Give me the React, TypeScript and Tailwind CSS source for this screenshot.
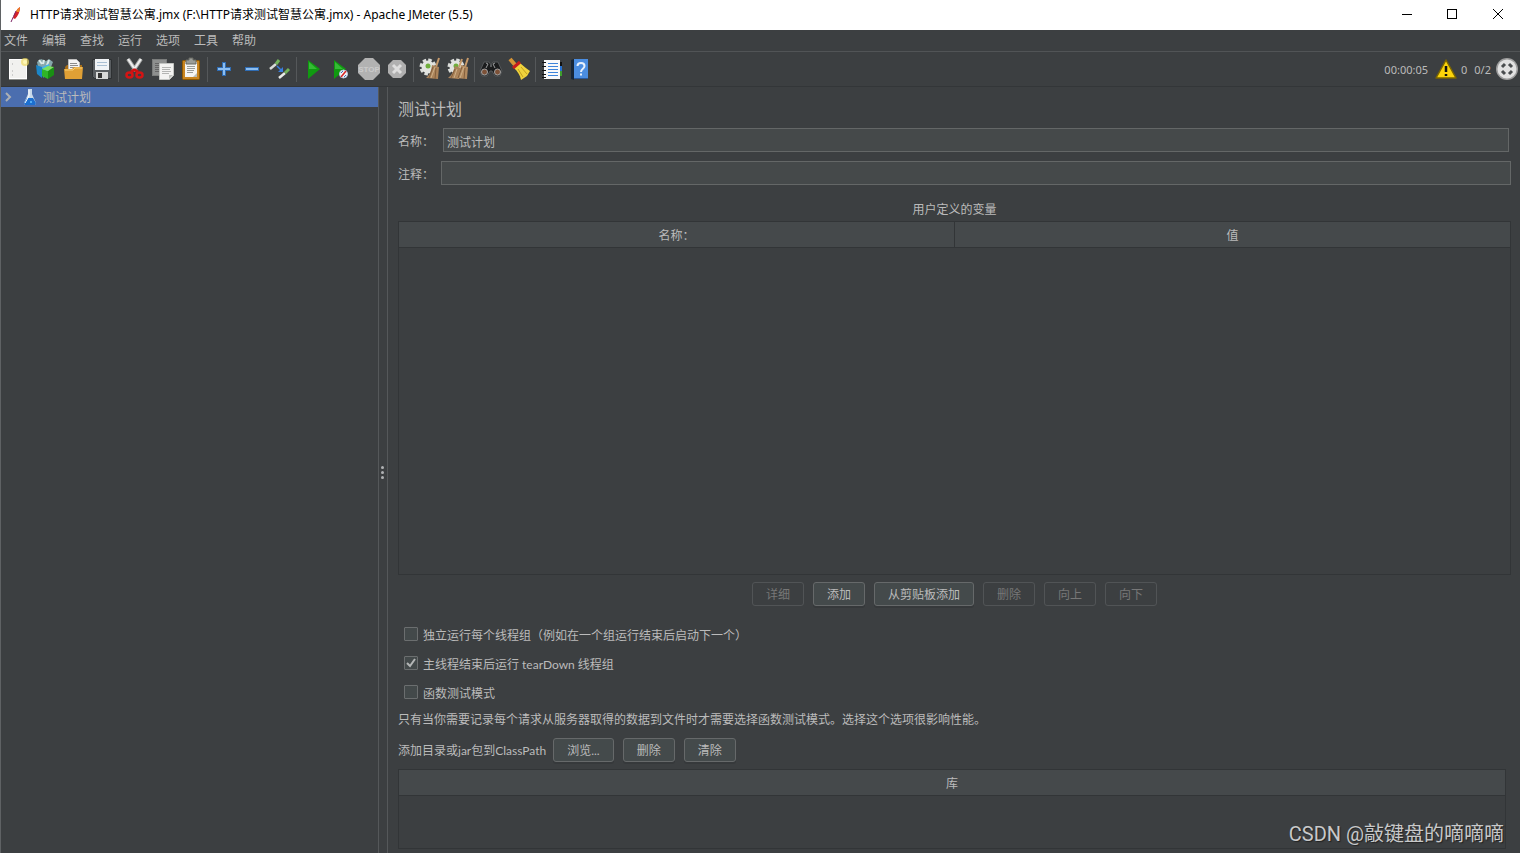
import React, { useState } from "react";

const menus = ["文件", "编辑", "查找", "运行", "选项", "工具", "帮助"];

// Shared 24x24 canvas for the toolbar icons
function Icon({ children }: { children: React.ReactNode }) {
  return (
    <svg className="w-6 h-6" viewBox="0 0 24 24" fill="none" aria-hidden="true">
      {children}
    </svg>
  );
}

function NewIcon() {
  return (
    <Icon>
      <rect x="3.5" y="2.5" width="17" height="19" fill="#f1f1ef" stroke="#fff" />
      <path d="M3 22.5h18" stroke="#8d8f8c" />
      <path d="M6 7h1M6 14h1M6 18h1" stroke="#aaa" />
      <circle cx="19" cy="5" r="4" fill="#f0dc62" opacity="0.7" />
      <circle cx="19" cy="5" r="2" fill="#fdf6b5" />
    </Icon>
  );
}

function TemplatesIcon() {
  return (
    <Icon>
      <path d="M3 5l4-3 5 2 3-2 4 3-2 5H4z" fill="#86a7ab" />
      <path d="M5 3l3 4M10 3l-1 4M15 3l-2 5" stroke="#dceaea" strokeWidth="2" />
      <path d="M2 8l6 2v11l-5-4z" fill="#1b86c8" />
      <path d="M8 10l7-3v6l-6 8z" fill="#45b4ea" />
      <path d="M8 12l6 2v8l-6-3z" fill="#2fb526" />
      <path d="M14 14l6-4v8l-6 4z" fill="#198f13" />
      <path d="M8 12l6-3 6 1-6 4z" fill="#7be35d" />
    </Icon>
  );
}

function OpenIcon() {
  return (
    <Icon>
      <path d="M3 10l2-2h15v13H4z" fill="#a86e17" />
      <path d="M6.5 2.5h8l3 3V14h-11z" fill="#f4f4f4" stroke="#bdbdbd" />
      <path d="M8 6.500h7M8 8.500h8M8 10.500h8" stroke="#8c8c8c" />
      <path d="M2 12h8l2-2h9l-1 12H3z" fill="#e0a035" />
      <path d="M3 13h8l2-2h7" stroke="#f7cf76" />
    </Icon>
  );
}

function SaveIcon() {
  return (
    <Icon>
      <path d="M2.5 2.5h19v19h-17l-2-2z" fill="#5a5e61" stroke="#2e3133" />
      <rect x="5" y="2" width="14" height="11" fill="#f0f3f6" />
      <path d="M7 5.500h10M7 8.500h10" stroke="#a9bfd3" />
      <rect x="6" y="15" width="12" height="7" fill="#d8d9d8" />
      <rect x="8" y="16" width="4" height="5" fill="#333" />
    </Icon>
  );
}

function CutIcon() {
  return (
    <Icon>
      <path d="M5 2l8 12M18 2l-8 12" stroke="#a7a9a8" strokeWidth="4" />
      <path d="M5 2l8 12M18 2l-8 12" stroke="#eeeeee" strokeWidth="2" />
      <path d="M8 15l3-2h1l3 2" stroke="#cc1111" strokeWidth="3" />
      <ellipse cx="6.500" cy="18" rx="3" ry="2.500" stroke="#d41414" strokeWidth="2.500" />
      <ellipse cx="16.500" cy="18" rx="3" ry="2.500" stroke="#d41414" strokeWidth="2.500" />
    </Icon>
  );
}

function CopyIcon() {
  return (
    <Icon>
      <rect x="1.500" y="2.500" width="14" height="16" fill="#8e908f" stroke="#7b7d7c" />
      <path d="M4 6.500h9M4 8.500h4M4 10.500h4M4 12.500h4M4 14.500h4" stroke="#666" />
      <path d="M8.500 6.500h14v12l-4 4h-10z" fill="#f3f3f1" stroke="#c4c6c3" />
      <path d="M11 10.500h9M11 12.500h8M11 14.500h9M11 16.500h7" stroke="#b4b5b3" />
      <path d="M18 22v-4h4z" fill="#bfc1bd" />
    </Icon>
  );
}

function PasteIcon() {
  return (
    <Icon>
      <rect x="3.500" y="3.500" width="17" height="19" rx="1" fill="#c98520" stroke="#8f5902" />
      <rect x="6" y="5" width="12" height="15" fill="#f4f4f2" />
      <path d="M8 9.500h8M8 11.500h8M8 13.500h7M8 15.500h6" stroke="#999b98" />
      <path d="M18 16v4h-4z" fill="#babdb6" />
      <path d="M7 3h3V1h4v2h3v4H7z" fill="#9b9d98" stroke="#666862" />
    </Icon>
  );
}

function PlusIcon() {
  return (
    <Icon>
      <path d="M10 5h4v5h5v4h-5v5h-4v-5H5v-4h5z" fill="#2f6cb3" />
      <path d="M12 6v12M6 12h12" stroke="#8bbdf0" strokeWidth="2" />
    </Icon>
  );
}

function MinusIcon() {
  return (
    <Icon>
      <rect x="5" y="10" width="14" height="4" fill="#2f6cb3" />
      <path d="M6 12h12" stroke="#8bbdf0" strokeWidth="2" />
    </Icon>
  );
}

function ToggleIcon() {
  return (
    <Icon>
      <path d="M2 12l6-5" stroke="#d8dbd8" strokeWidth="2.500" />
      <path d="M8 7l3-4" stroke="#73b35b" strokeWidth="3" />
      <path d="M11 21l6-5" stroke="#e9ebe9" strokeWidth="2.500" />
      <path d="M17 16l4-4" stroke="#73b35b" strokeWidth="3" />
      <path d="M9 9l4 4" stroke="#397ee0" strokeWidth="1.500" />
      <path d="M15 10v5h-5z" fill="#397ee0" />
    </Icon>
  );
}

function StartIcon() {
  return (
    <Icon>
      <path d="M7 3l12 9-12 10z" fill="#109a10" />
      <path d="M8 5l8 7H8z" fill="#35bb35" />
    </Icon>
  );
}

function StartNoPauseIcon() {
  return (
    <Icon>
      <path d="M5 3l12 9-12 10z" fill="#109a10" />
      <path d="M6 5l8 7H6z" fill="#35bb35" />
      <circle cx="14.500" cy="17" r="4" fill="#f4f4f4" stroke="#b9cbe2" />
      <path d="M12 20l5-6" stroke="#d62525" strokeWidth="1.500" />
      <path d="M12 16l2-2M15 20l2-2" stroke="#3d70b8" />
    </Icon>
  );
}

function StopIcon() {
  return (
    <Icon>
      <path d="M8 1h8l7 7v8l-7 7H8l-7-7V8z" fill="#b2b2b2" />
      <text
        x="12"
        y="15"
        textAnchor="middle"
        fontSize="8"
        fontWeight="bold"
        fontFamily="Liberation Sans, sans-serif"
        fill="#cbcbcb"
      >
        STOP
      </text>
    </Icon>
  );
}

function ShutdownIcon() {
  return (
    <Icon>
      <path d="M8 3h8l5 5v8l-5 5H8l-5-5V8z" fill="#b0b0b0" />
      <path d="M8 8l8 8M16 8l-8 8" stroke="#dedede" strokeWidth="3" />
    </Icon>
  );
}

function Gear() {
  return (
    <>
      <circle cx="10" cy="10" r="7" stroke="#dcdedb" strokeWidth="3" strokeDasharray="3.500 2" />
      <circle cx="10" cy="10" r="6.500" fill="#e2e4e0" />
      <circle cx="10" cy="9" r="2.500" fill="#6fae3c" />
    </>
  );
}

function ClearIcon() {
  return (
    <Icon>
      <Gear />
      <path d="M21 1l-3 9" stroke="#c79a6a" strokeWidth="2" />
      <path d="M14 8l7 2-1 12-12-1c4-3 5-7 6-13z" fill="#ab8359" />
      <path d="M15 10l-4 11M18 11l-1 11" stroke="#835f3c" />
      <path d="M17 10l-4 11" stroke="#cdae86" />
    </Icon>
  );
}

function ClearAllIcon() {
  return (
    <Icon>
      <Gear />
      <path d="M16 2l-3 8M22 1l-3 9" stroke="#c79a6a" strokeWidth="2" />
      <path d="M9 9l6 2-2 11-11-1c4-3 5-6 7-12z" fill="#ab8359" />
      <path d="M15 8l7 2-1 12-12-1c4-3 5-7 6-13z" fill="#b38b60" />
      <path d="M9 12l-4 9M16 10l-4 11M19 11l-1 11" stroke="#835f3c" />
      <path d="M11 12l-3 9M18 10l-4 11" stroke="#cdae86" />
    </Icon>
  );
}

function SearchIcon() {
  return (
    <Icon>
      <path
        d="M5 5h5l2 3 2-3h5l4 9-2 5h-5l-3-5h-2l-3 5H3l-2-5z"
        fill="#1b1c1d"
        stroke="#55585a"
      />
      <path d="M7 6l2 1-2 4M16 6l-2 1 2 4M11 9h2" stroke="#9a9c9d" />
      <circle cx="5.500" cy="15" r="3" fill="#7c5138" stroke="#a2a4a5" />
      <circle cx="18.500" cy="15" r="3" fill="#7c5138" stroke="#a2a4a5" />
    </Icon>
  );
}

function BroomIcon() {
  return (
    <Icon>
      <path d="M3 2l6 7" stroke="#d59436" strokeWidth="4" />
      <path d="M7 11l6-5c3 3 6 5 10 8l-3 5-6 4c-1-5-3-8-7-12z" fill="#f0d33c" />
      <path d="M6 11l7-6" stroke="#c61c1c" strokeWidth="3" />
      <path d="M11 12l5 8M14 10l6 7" stroke="#c2a01c" />
    </Icon>
  );
}

function FunctionIcon() {
  return (
    <Icon>
      <rect x="4" y="3" width="16" height="19" fill="#f7f8f9" />
      <path d="M8 6.500h10M8 9.500h10M8 12.500h10M8 15.500h10M8 18.500h10" stroke="#3c83da" />
      <path d="M2 5.500h4M2 9.500h4M2 13.500h4M2 17.500h4M2 20.500h4" stroke="#111" />
      <path d="M21 5v4" stroke="#111" strokeWidth="2" />
      <path d="M21 9v5" stroke="#246fcf" strokeWidth="2" />
      <path d="M21 14v5" stroke="#3e9e2d" strokeWidth="2" />
    </Icon>
  );
}

function HelpIcon() {
  return (
    <Icon>
      <path d="M3 3l3-1v21l-3-1z" fill="#172638" />
      <rect x="6" y="2" width="14" height="20" fill="#4b8de0" />
      <path d="M6 21.500h14" stroke="#29599d" />
      <path d="M9.500 9c0-4 7-4 7 0 0 3-3.500 2.500-3.500 6M13 16.500v2" stroke="#e8f1fc" strokeWidth="2" />
    </Icon>
  );
}

const toolGroups = [
  [
    { name: "新建", icon: <NewIcon /> },
    { name: "模板", icon: <TemplatesIcon /> },
    { name: "打开", icon: <OpenIcon /> },
    { name: "保存", icon: <SaveIcon /> },
  ],
  [
    { name: "剪切", icon: <CutIcon /> },
    { name: "复制", icon: <CopyIcon /> },
    { name: "粘贴", icon: <PasteIcon /> },
  ],
  [
    { name: "全部展开", icon: <PlusIcon /> },
    { name: "全部折叠", icon: <MinusIcon /> },
    { name: "切换", icon: <ToggleIcon /> },
  ],
  [
    { name: "启动", icon: <StartIcon /> },
    { name: "不停顿开始", icon: <StartNoPauseIcon /> },
    { name: "停止", icon: <StopIcon />, disabled: true },
    { name: "关闭", icon: <ShutdownIcon />, disabled: true },
  ],
  [
    { name: "清除", icon: <ClearIcon /> },
    { name: "清除全部", icon: <ClearAllIcon /> },
  ],
  [
    { name: "查找", icon: <SearchIcon /> },
    { name: "重置搜索", icon: <BroomIcon /> },
  ],
  [
    { name: "函数助手对话框", icon: <FunctionIcon /> },
    { name: "帮助", icon: <HelpIcon /> },
  ],
];

function TitleBar() {
  return (
    <header className="flex h-[30px] shrink-0 items-center bg-white text-black">
      <svg className="ml-[7px] h-4 w-4" viewBox="0 0 16 16" fill="none" aria-hidden="true">
        <path d="M12 0c-3 2-6 6-7 11l2 1c3-3 5-7 5-12z" fill="#d3222a" />
        <path d="M12 0c-2 1-3 3-4 5l3 0z" fill="#f08a24" />
        <path d="M8 4c-2 4-3 7-5 11" stroke="#7d2364" />
      </svg>
      <h1 className="ml-1.5 flex-1 whitespace-nowrap">
        HTTP请求测试智慧公寓.jmx (F:\HTTP请求测试智慧公寓.jmx) - Apache JMeter (5.5)
      </h1>
      <button type="button" aria-label="最小化" className="flex h-full w-[46px] items-center justify-center">
        <svg className="h-3 w-3" viewBox="0 0 12 12" stroke="#000">
          <path d="M1 5.500h10" />
        </svg>
      </button>
      <button type="button" aria-label="最大化" className="flex h-full w-[46px] items-center justify-center">
        <svg className="h-3 w-3" viewBox="0 0 12 12" stroke="#000" fill="none">
          <rect x="0.500" y="0.500" width="9" height="9" />
        </svg>
      </button>
      <button type="button" aria-label="关闭" className="flex h-full w-11 items-center justify-center">
        <svg className="h-3 w-3" viewBox="0 0 12 12" stroke="#000">
          <path d="M1 0l10 10M11 0L1 10" />
        </svg>
      </button>
    </header>
  );
}

function Toolbar() {
  return (
    <div className="flex h-[35px] shrink-0 items-center border-b border-[#333638] pl-[3px]">
      {toolGroups.map((group, i) => (
        <React.Fragment key={i}>
          {i > 0 && (
            <div className="flex w-[5px] justify-center">
              <div className="h-[25px] w-px bg-[#55585a]" />
            </div>
          )}
          {group.map((tool) => (
            <button
              key={tool.name}
              type="button"
              aria-label={tool.name}
              disabled={"disabled" in tool}
              className="flex h-7 w-7 items-center justify-center"
            >
              {tool.icon}
            </button>
          ))}
        </React.Fragment>
      ))}
      <div className="ml-auto flex items-center pr-px font-['Noto_Sans',sans-serif] text-[11px]">
        <span className="pt-px">00:00:05</span>
        <svg className="ml-1.5 h-6 w-6" viewBox="0 0 24 24" aria-hidden="true">
          <path d="M12 3l10 18H2z" fill="#fbd40a" stroke="#7a6500" strokeWidth="1.500" strokeLinejoin="round" />
          <path d="M12 9v6M12 17v2" stroke="#111" strokeWidth="2.500" />
        </svg>
        <span className="ml-[3px] pt-px">0</span>
        <span className="ml-[7px] pt-px">0/2</span>
        <svg className="ml-1 h-6 w-6" viewBox="0 0 24 24" fill="none" aria-hidden="true">
          <circle cx="12" cy="12" r="11" fill="#9d9d9d" />
          <circle cx="12" cy="12" r="9.500" fill="#e2e2e2" />
          <path
            d="M7 10l3-3M14 7l3 3M17 14l-3 3M10 17l-3-3"
            stroke="#4a4d4f"
            strokeWidth="3"
          />
        </svg>
      </div>
    </div>
  );
}

function TestTree() {
  return (
    <aside className="w-[378px] shrink-0 border-r border-[#55585a]">
      <div className="flex h-5 items-center bg-[#4b6eaf]">
        <button type="button" aria-label="展开" className="ml-1 flex h-4 w-2 items-center">
          <svg className="h-3 w-2" viewBox="0 0 8 12" fill="none" stroke="#adb0b3" strokeWidth="2">
            <path d="M1 2l4 4-4 4" />
          </svg>
        </button>
        <svg className="ml-[9px] h-4 w-4" viewBox="0 0 16 16" aria-hidden="true">
          <path d="M6 0h4v5l4 9-1 2H3l-1-2 4-9z" fill="#c9d9ea" />
          <path d="M5 9h6l3 5-1 2H3l-1-2z" fill="#1c6fd0" />
          <path d="M7 1v6l-4 7" stroke="#fff" fill="none" />
          <circle cx="9" cy="13" r="1" fill="#63c2ff" />
        </svg>
        <span className="ml-[5px] pt-0.5">测试计划</span>
      </div>
    </aside>
  );
}

interface PanelButtonProps {
  label: string;
  disabled?: boolean;
}

function PanelButton({ label, disabled }: PanelButtonProps) {
  return (
    <button
      type="button"
      disabled={disabled}
      className="h-6 rounded-[3px] border border-[#66696a] bg-[#444a4b] px-[13px] pt-0.5 leading-5 whitespace-nowrap shadow-[0_2px_0_#36393b] disabled:border-[#515456] disabled:bg-transparent disabled:text-[#777777] disabled:shadow-none"
    >
      {label}
    </button>
  );
}

interface CheckRowProps {
  id: string;
  label: string;
  initial?: boolean;
}

function CheckRow({ id, label, initial = false }: CheckRowProps) {
  const [checked, setChecked] = useState(initial);

  return (
    <div className="flex h-[29px] items-center pl-1.5">
      <span className="relative flex">
        <input
          id={id}
          type="checkbox"
          checked={checked}
          onChange={(e) => setChecked(e.target.checked)}
          className="h-3.5 w-3.5 appearance-none rounded-[1px] border border-[#6b6e6f] bg-[#43494a]"
        />
        {checked && (
          <svg
            className="pointer-events-none absolute inset-0 h-3.5 w-3.5"
            viewBox="0 0 14 14"
            fill="none"
            stroke="#b4b6b6"
            strokeWidth="2"
          >
            <path d="M3 7l3 3 5-7" />
          </svg>
        )}
      </span>
      <label htmlFor={id} className="pt-1 pl-[5px]">
        {label}
      </label>
    </div>
  );
}

function TestPlanPanel() {
  return (
    <main className="flex min-w-0 flex-1 flex-col border-l border-[#55585a] pt-2.5 pr-[9px] pb-1 pl-2.5">
      <h2 className="text-base leading-6">测试计划</h2>
      <div className="mt-[7px] flex items-center pr-0.5">
        <label htmlFor="plan-name" className="w-[45px] pt-[3px]">
          名称：
        </label>
        <input
          id="plan-name"
          defaultValue="测试计划"
          className="h-6 min-w-0 flex-1 border border-[#646767] bg-[#45494a] px-[3px] pt-0.5 outline-none"
        />
      </div>
      <div className="mt-[9px] flex items-center">
        <label htmlFor="plan-comment" className="w-[43px] pt-[3px]">
          注释：
        </label>
        <input
          id="plan-comment"
          className="h-6 min-w-0 flex-1 border border-[#646767] bg-[#45494a] px-[3px] pt-0.5 outline-none"
        />
      </div>

      <h3 id="variables" className="mt-3.5 pt-px pb-px text-center leading-5">
        用户定义的变量
      </h3>
      <div className="min-h-40 flex-1 border border-[#323537]">
        <table aria-labelledby="variables" className="w-full table-fixed border-collapse">
          <thead>
            <tr className="h-[25px] border-b border-[#323537] bg-[#45494b]">
              <th className="border-r border-[#323537] pt-[3px] font-normal">名称：</th>
              <th className="pt-[3px] font-normal">值</th>
            </tr>
          </thead>
          <tbody />
        </table>
      </div>
      <div className="mt-[7px] flex justify-center gap-[9px]">
        <PanelButton label="详细" disabled />
        <PanelButton label="添加" />
        <PanelButton label="从剪贴板添加" />
        <PanelButton label="删除" disabled />
        <PanelButton label="向上" disabled />
        <PanelButton label="向下" disabled />
      </div>

      <div className="mt-[13px]">
        <CheckRow id="serialize" label="独立运行每个线程组（例如在一个组运行结束后启动下一个）" />
        <CheckRow id="teardown" label="主线程结束后运行 tearDown 线程组" initial />
        <CheckRow id="functional" label="函数测试模式" />
      </div>
      <p className="pt-0.5 leading-6">
        只有当你需要记录每个请求从服务器取得的数据到文件时才需要选择函数测试模式。选择这个选项很影响性能。
      </p>

      <div className="mt-1.5 flex items-center gap-[9px]">
        <span className="-mr-0.5 pt-0.5">添加目录或jar包到ClassPath</span>
        <PanelButton label="浏览..." />
        <PanelButton label="删除" />
        <PanelButton label="清除" />
      </div>
      <div className="mt-[7px] mr-[5px] h-20 shrink-0 border border-[#323537]">
        <table className="w-full border-collapse">
          <thead>
            <tr className="h-[25px] border-b border-[#323537] bg-[#45494b]">
              <th className="pt-[3px] font-normal">库</th>
            </tr>
          </thead>
          <tbody />
        </table>
      </div>
    </main>
  );
}

export default function App() {
  return (
    <div className="relative flex h-screen flex-col border-l border-[#5f6264] bg-[#3c3f41] font-['Noto_Sans','Noto_Sans_CJK_SC',sans-serif] text-[12px] leading-4 text-[#bbbbbb]">
      <TitleBar />
      <nav className="flex h-[22px] shrink-0 items-center gap-3.5 border-b border-[#515456] pt-px pl-[3px]">
        {menus.map((menu) => (
          <button key={menu} type="button">
            {menu}
          </button>
        ))}
      </nav>
      <Toolbar />
      <div className="flex min-h-0 flex-1 font-['Lato','Noto_Sans_CJK_SC',sans-serif]">
        <TestTree />
        {/* Split pane handle */}
        <div className="flex w-2 shrink-0 flex-col items-center justify-center gap-0.5 pt-1 pr-px">
          <div className="h-[3px] w-[3px] rounded-full bg-[#afb1b3]" />
          <div className="h-[3px] w-[3px] rounded-full bg-[#afb1b3]" />
          <div className="h-[3px] w-[3px] rounded-full bg-[#afb1b3]" />
        </div>
        <TestPlanPanel />
      </div>
      <div className="pointer-events-none absolute right-4 bottom-[5px] font-['Roboto','Noto_Sans_CJK_SC',sans-serif] text-[20px] leading-7 text-[#c8c9ca] [text-shadow:1px_1px_1px_#222]">
        CSDN @敲键盘的嘀嘀嘀
      </div>
    </div>
  );
}
